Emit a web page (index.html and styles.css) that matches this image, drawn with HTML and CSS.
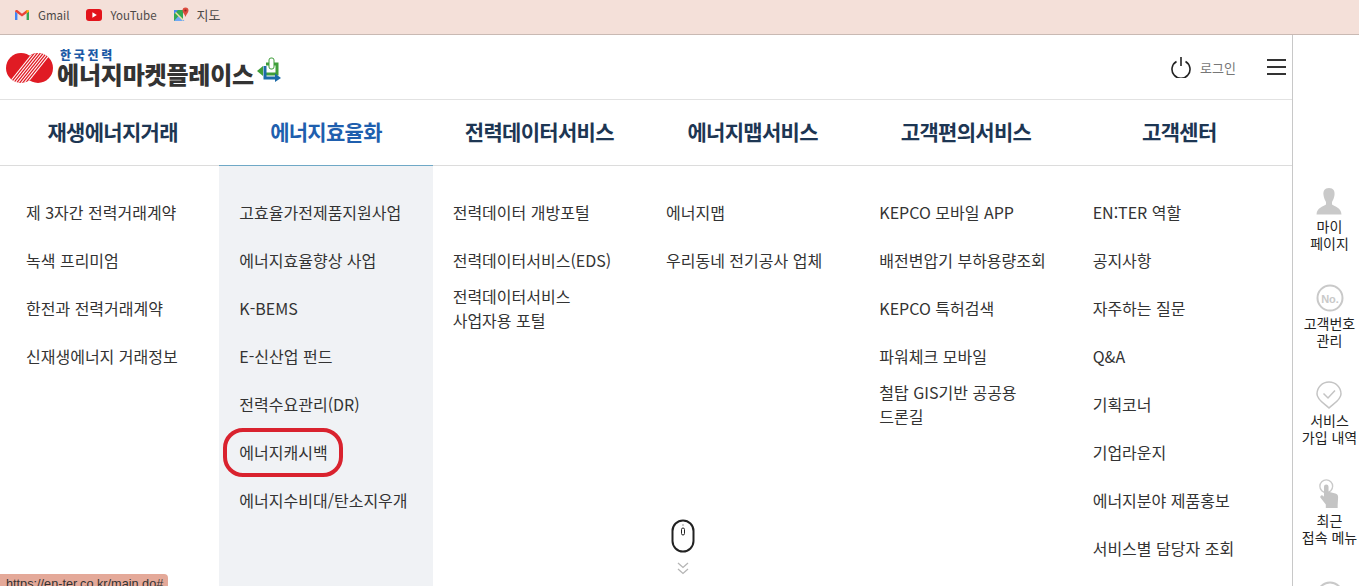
FILE: index.html
```html
<!DOCTYPE html>
<html lang="ko">
<head>
<meta charset="utf-8">
<title>에너지마켓플레이스</title>
<link rel="stylesheet" href="styles.css">
</head>
<body>
<div class="bookmarks">
  <a class="bookmark">
    <svg width="16" height="16" viewBox="0 0 16 16"><path d="M1 13V4.5L3.4 6.2V13Z" fill="#4285f4"/><path d="M12.6 13V6.2L15 4.5V13Z" fill="#34a853"/><path d="M1 4.5C1 3 2.6 2.5 3.6 3.3L8 6.7 12.4 3.3C13.4 2.5 15 3 15 4.5L12.6 6.2 8 9.6 3.4 6.2Z" fill="#ea4335"/><path d="M12.4 3.3C13.4 2.5 15 3 15 4.5L12.6 6.2V3.2Z" fill="#fbbc04"/></svg>
    <span>Gmail</span>
  </a>
  <a class="bookmark">
    <svg width="16" height="12" viewBox="0 0 16 12"><rect width="16" height="12" rx="3" fill="#e3141c"/><path d="M6.4 3.3V8.7L10.8 6Z" fill="#fff"/></svg>
    <span>YouTube</span>
  </a>
  <a class="bookmark bookmark-ko">
    <svg width="16" height="16" viewBox="0 0 16 16"><path d="M1 3H10V14H1Z" fill="#34a853"/><path d="M1 14L6 8.5 11.5 14Z" fill="#6fa8f5"/><path d="M1 3L10 12V14L1 5Z" fill="#f3e3a0"/><path d="M1 3H5L1 7Z" fill="#4a8af4"/><path d="M12.5 0.5A3 3 0 0 1 15.5 3.5C15.5 5.5 13.3 7 12.5 10 11.7 7 9.5 5.5 9.5 3.5A3 3 0 0 1 12.5 0.5Z" fill="#dd4b3e"/><circle cx="12.5" cy="3.5" r="1.1" fill="#8d2a22"/></svg>
    <span>지도</span>
  </a>
</div>
<div class="frame">
  <main class="content">
    <header class="topbar">
      <a class="logo">
        <svg class="logo-mark" width="47" height="30" viewBox="0 0 47 30">
          <defs>
            <clipPath id="rings"><circle cx="15" cy="15" r="15"/><circle cx="32" cy="15" r="15"/></clipPath>
          </defs>
          <circle cx="15" cy="15" r="15" fill="#e01b24"/>
          <circle cx="32" cy="15" r="15" fill="#e01b24"/>
          <g clip-path="url(#rings)" stroke="#fff" stroke-width="1.100">
            <path d="M3 30L27 0"/><path d="M6 30L30 0"/><path d="M9 30L33 0"/><path d="M12 30L36 0"/><path d="M15 30L39 0"/><path d="M18 30L42 0"/><path d="M21 30L45 0"/>
          </g>
        </svg>
        <span class="logo-text">
          <span class="logo-sub">한국전력</span>
          <span class="logo-main">에너지마켓플레이스</span>
        </span>
        <svg class="logo-arrows" width="25" height="25" viewBox="0 0 25 25">
          <path d="M9 7H20V17H9" fill="none" stroke="#3f9e3a" stroke-width="3"/>
          <path d="M0 14L6 9V19Z" fill="#3f9e3a"/>
          <path d="M8 9V21H19" fill="none" stroke="#1c6aa8" stroke-width="3"/>
          <path d="M24 21L18 16.500V25Z" fill="#1c6aa8"/>
          <rect x="12" y="1" width="5" height="11" rx="2" fill="#fff" stroke="#3f9e3a"/>
        </svg>
      </a>
      <div class="account">
        <a class="login">
          <svg width="20" height="22" viewBox="0 0 20 22"><path d="M5.500 5.500A9 9 0 1 0 14.500 5.500" fill="none" stroke="#222" stroke-width="1.600"/><path d="M10 1V10" stroke="#222" stroke-width="1.600"/></svg>
          <span>로그인</span>
        </a>
        <button class="hamburger" aria-label="메뉴"><i></i><i></i><i></i></button>
      </div>
    </header>
    <nav class="gnb">
      <a class="gnb-item">재생에너지거래</a>
      <a class="gnb-item active">에너지효율화</a>
      <a class="gnb-item">전력데이터서비스</a>
      <a class="gnb-item">에너지맵서비스</a>
      <a class="gnb-item">고객편의서비스</a>
      <a class="gnb-item">고객센터</a>
    </nav>
    <section class="menus">
      <ul class="menu">
        <li>제 3자간 전력거래계약</li>
        <li>녹색 프리미엄</li>
        <li>한전과 전력거래계약</li>
        <li>신재생에너지 거래정보</li>
      </ul>
      <ul class="menu current">
        <li>고효율가전제품지원사업</li>
        <li>에너지효율향상 사업</li>
        <li>K-BEMS</li>
        <li>E-신산업 펀드</li>
        <li>전력수요관리(DR)</li>
        <li class="circled">에너지캐시백</li>
        <li>에너지수비대/탄소지우개</li>
      </ul>
      <ul class="menu">
        <li>전력데이터 개방포털</li>
        <li>전력데이터서비스(EDS)</li>
        <li>전력데이터서비스<br>사업자용 포털</li>
      </ul>
      <ul class="menu">
        <li>에너지맵</li>
        <li>우리동네 전기공사 업체</li>
      </ul>
      <ul class="menu">
        <li>KEPCO 모바일 APP</li>
        <li>배전변압기 부하용량조회</li>
        <li>KEPCO 특허검색</li>
        <li>파워체크 모바일</li>
        <li>철탑 GIS기반 공공용<br>드론길</li>
      </ul>
      <ul class="menu">
        <li>EN:TER 역할</li>
        <li>공지사항</li>
        <li>자주하는 질문</li>
        <li>Q&amp;A</li>
        <li>기획코너</li>
        <li>기업라운지</li>
        <li>에너지분야 제품홍보</li>
        <li>서비스별 담당자 조회</li>
      </ul>
    </section>
    <div class="scroll-hint">
      <svg width="24" height="34" viewBox="0 0 24 34"><rect x="1.500" y="1.500" width="21" height="31" rx="10.500" fill="#fff" stroke="#222" stroke-width="2"/><rect x="10.500" y="9" width="3" height="7" rx="1.500" fill="none" stroke="#222"/><path d="M12 5V7" stroke="#999"/></svg>
      <svg width="12" height="13" viewBox="0 0 12 13"><path d="M1 1L6 5.500 11 1M1 7L6 11.500 11 7" fill="none" stroke="#b5b5b5" stroke-width="1.300"/></svg>
    </div>
  </main>
  <aside class="quick">
    <a class="quick-item">
      <svg width="26" height="28" viewBox="0 0 26 28"><path d="M13 1C17.500 1 19 4 18.500 8 18.200 11 17 13 16 15V17.500C19 20 25 20 25.500 27.500H.5C1 20 7 20 10 17.500V15C9 13 7.800 11 7.500 8 7 4 8.500 1 13 1Z" fill="#c9c9c9"/></svg>
      <span>마이<br>페이지</span>
    </a>
    <a class="quick-item">
      <svg width="28" height="28" viewBox="0 0 28 28"><circle cx="14" cy="14" r="12.500" fill="none" stroke="#c9c9c9" stroke-width="2"/><text x="14" y="18.500" text-anchor="middle" class="no-mark">No.</text></svg>
      <span>고객번호<br>관리</span>
    </a>
    <a class="quick-item">
      <svg width="26" height="28" viewBox="0 0 26 28"><path d="M13 27C9 23 1 19 1 13A12 12 0 0 1 25 13C25 19 17 23 13 27Z" fill="none" stroke="#c4c4c4" stroke-width="1.500"/><path d="M7.500 12.500L12 17 19 9.500" fill="none" stroke="#c4c4c4" stroke-width="1.500"/></svg>
      <span>서비스<br>가입 내역</span>
    </a>
    <a class="quick-item">
      <svg width="22" height="31" viewBox="0 0 24 34"><circle cx="9" cy="9" r="7" fill="none" stroke="#c9c9c9" stroke-width="1.500"/><path d="M6.500 9.500A2.500 2.500 0 0 1 11.500 9.500V15L19 17C21 17.500 22 19 22 21L21.500 30V33H8.500V29L2.500 21.500C2 19.500 4 18 5.500 19.500L6.500 20.500Z" fill="#c4c4c4"/></svg>
      <span>최근<br>접속 메뉴</span>
    </a>
    <a class="quick-item last">
      <svg width="28" height="28" viewBox="0 0 28 28"><circle cx="14" cy="14" r="12.500" fill="none" stroke="#c9c9c9" stroke-width="2"/></svg>
    </a>
  </aside>
</div>
<div class="status">https://en-ter.co.kr/main.do#</div>
</body>
</html>
```

FILE: styles.css
```css
*, *::before, *::after { box-sizing: border-box; }
html, body { height: 100%; }
body {
  margin: 0;
  height: 586px;
  overflow: hidden;
  background: #fff;
  color: #333;
  font-family: "Noto Sans CJK KR", "Noto Sans", sans-serif;
}
ul { list-style: none; margin: 0; padding: 0; }
a { color: inherit; text-decoration: none; }

.bookmarks {
  height: 35px;
  padding: 0 0 5px 14px;
  display: flex;
  align-items: center;
  gap: 16px;
  background: #f4e0d9;
  border-bottom: 1px solid #c9b9b3;
}
.bookmark {
  display: flex;
  align-items: center;
  gap: 8px;
  font-size: 11.500px;
  color: #4d4a48;
}
.bookmark:first-child { margin-right: 1px; }
.bookmark-ko { font-size: 13px; }

.frame { display: flex; height: 551px; overflow: hidden; }
.content { position: relative; width: 1292px; flex: none; }

.topbar {
  height: 65px;
  display: flex;
  align-items: center;
  justify-content: space-between;
  padding: 0 6px;
  border-bottom: 1px solid #e2e2e2;
}
.logo { display: flex; align-items: center; }
.logo-mark { margin-top: 1px; }
.logo-text { display: flex; flex-direction: column; margin-left: 4px; }
.logo-sub {
  font-size: 12px;
  line-height: 12px;
  font-weight: 900;
  color: #1c5aa6;
  margin-left: 3px;
  letter-spacing: 2.700px;
}
.logo-main {
  font-size: 24px;
  line-height: 25px;
  font-weight: 900;
  color: #333;
  letter-spacing: -0.200px;
}
.logo-arrows { margin: 5px 0 0 3px; }
.account { display: flex; align-items: center; gap: 31px; }
.login { display: flex; align-items: center; gap: 9px; font-size: 13px; color: #777; }
.hamburger {
  display: flex;
  flex-direction: column;
  gap: 5px;
  width: 19px;
  padding: 0;
  border: 0;
  background: none;
}
.hamburger i { display: block; height: 2px; background: #333; }

.gnb {
  height: 66px;
  display: grid;
  grid-template-columns: repeat(6, 1fr);
  padding: 0 6px;
  border-bottom: 1px solid #dcdcdc;
}
.gnb-item {
  display: flex;
  align-items: center;
  justify-content: center;
  height: 66px;
  padding-bottom: 4px;
  font-size: 21px;
  font-weight: 700;
  color: #1d3653;
  letter-spacing: -0.700px;
}
.gnb-item.active { color: #1f5fae; border-bottom: 1px solid #6fa8c6; }

.menus {
  display: grid;
  grid-template-columns: repeat(6, 1fr);
  padding: 0 6px;
  height: 420px;
}
.menu { padding: 22px 0 0 20px; }
.menu.current { background: #f0f2f5; }
.menu li {
  position: relative;
  height: 48px;
  display: flex;
  align-items: center;
  font-size: 16px;
  line-height: 24px;
  color: #333;
}
.circled::after {
  content: "";
  position: absolute;
  left: -16px;
  top: 0;
  width: 120px;
  height: 49px;
  border: 4px solid #d9222e;
  border-radius: 20px;
}

.scroll-hint {
  position: absolute;
  left: 671px;
  top: 484px;
  display: flex;
  flex-direction: column;
  align-items: center;
  gap: 9px;
}

.quick {
  flex: 1;
  border-left: 1px solid #c8c8c8;
  padding: 152px 0 0 7px;
  display: flex;
  flex-direction: column;
  align-items: center;
}
.quick-item {
  flex: none;
  height: 97px;
  display: flex;
  flex-direction: column;
  align-items: center;
  gap: 3px;
  font-size: 14px;
  line-height: 17px;
  text-align: center;
  color: #222;
  white-space: nowrap;
}
.quick-item.last { padding-top: 6px; }
.no-mark { font: 900 11px "Liberation Sans", sans-serif; fill: #c9c9c9; }

.status {
  position: absolute;
  left: 0;
  top: 574px;
  height: 12px;
  width: 168px;
  padding: 3px 0 0 6px;
  font: 12.700px/15px "Liberation Sans", sans-serif;
  color: #333;
  background: #e4a999;
  border-radius: 0 4px 0 0;
  overflow: hidden;
}
```
